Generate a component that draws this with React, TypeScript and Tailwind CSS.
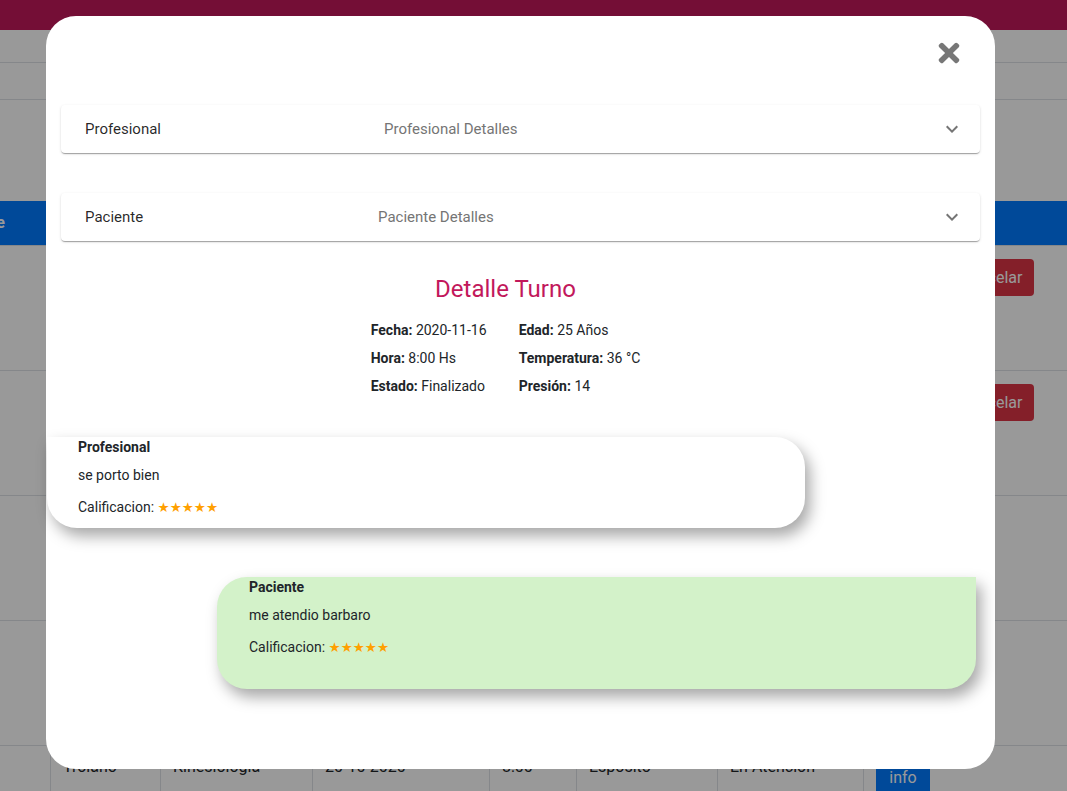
import { FaTimes } from 'react-icons/fa';

const rows = [
  { esp: 'Pereyra', espec: 'Pediatria', fecha: '16-11-2020', hora: '8:00', prof: 'Gomez', estado: 'Finalizado', cancel: true },
  { esp: 'Lopez', espec: 'Cardiologia', fecha: '18-11-2020', hora: '9:30', prof: 'Martinez', estado: 'Pendiente', cancel: true },
  { esp: 'Diaz', espec: 'Odontologia', fecha: '21-11-2020', hora: '10:00', prof: 'Fernandez', estado: 'Cancelado', cancel: false },
  { esp: 'Suarez', espec: 'Traumatologia', fecha: '24-11-2020', hora: '11:00', prof: 'Rossi', estado: 'Rechazado', cancel: false },
  { esp: 'Troiano', espec: 'Kinesiologia', fecha: '20-10-2020', hora: '8:00', prof: 'Esposito', estado: 'En Atencion', cancel: false },
];

const gridCols = 'grid grid-cols-[50px_110px_152px_177px_87px_141px_146px_204px]';

function Stars() {
  return (
    <span className="font-['DejaVu_Sans',sans-serif] text-[13.5px] text-[#ffa000]">★★★★★</span>
  );
}

function Chevron() {
  return (
    <svg viewBox="0 0 24 24" className="h-6 w-6 fill-[#757575]">
      <path d="M16.59 8.59L12 13.17 7.41 8.59 6 10l6 6 6-6z" />
    </svg>
  );
}

export default function App() {
  return (
    <div className="relative h-[791px] overflow-hidden bg-white font-['Roboto','Liberation_Sans',sans-serif] text-[#212529]">
      {/* page behind the modal */}
      <div className="h-[30px] bg-[#c2185b]" />
      <div className="h-[32px]" />
      <div className="h-[38px] border-y border-[#dee2e6]" />
      <div className="h-[101px]" />

      <div className={`${gridCols} h-[44px] items-center bg-[#007bff] text-base font-bold text-white`}>
        <div className="flex justify-end overflow-hidden pr-[45px]">
          <span className="whitespace-nowrap">Paciente</span>
        </div>
        <div className="px-3">Especialista</div>
        <div className="px-3">Especialidad</div>
        <div className="px-3">Fecha</div>
        <div className="px-3">Hora</div>
        <div className="px-3">Profesional</div>
        <div className="px-3">Estado</div>
        <div className="px-3">Acciones</div>
      </div>

      {rows.map((r, i) => (
        <div key={i} className={`${gridCols} h-[125px] border-t border-[#dee2e6] text-base`}>
          <div />
          <div className="border-l border-[#dee2e6] px-3 pt-[9px]">{r.esp}</div>
          <div className="border-l border-[#dee2e6] px-3 pt-[9px]">{r.espec}</div>
          <div className="border-l border-[#dee2e6] px-3 pt-[9px]">{r.fecha}</div>
          <div className="border-l border-[#dee2e6] px-3 pt-[9px]">{r.hora}</div>
          <div className="border-l border-[#dee2e6] px-3 pt-[9px]">{r.prof}</div>
          <div className="border-l border-[#dee2e6] px-3 pt-[9px]">{r.estado}</div>
          <div className="flex items-start gap-[18px] border-l border-[#dee2e6] pl-[12px] pt-[13px]">
            <button className="h-[37px] w-[54px] rounded bg-[#007bff] text-base text-white">info</button>
            {r.cancel && (
              <button className="h-[37px] w-[86px] rounded bg-[#dc3545] text-base text-white">Cancelar</button>
            )}
          </div>
        </div>
      ))}

      {/* overlay + modal */}
      <div className="absolute inset-0 bg-black/40">
        <div className="absolute left-[46px] top-[16px] h-[753px] w-[949px] rounded-[30px] bg-white">
          <div className="flex h-[89px] items-start justify-end pr-[31px] pt-[22px]">
            <FaTimes size={30} color="#777777" />
          </div>

          <div className="mx-[15px] flex h-[48px] items-center rounded bg-white pl-6 pr-4 text-[15px] shadow-[0_2px_1px_-1px_rgba(0,0,0,0.2),0_1px_1px_0_rgba(0,0,0,0.14),0_1px_3px_0_rgba(0,0,0,0.12)]">
            <div className="w-[299px] text-black/85">Profesional</div>
            <div className="text-[#757575]">Profesional Detalles</div>
            <div className="ml-auto">
              <Chevron />
            </div>
          </div>

          <div className="mx-[15px] mt-[40px] flex h-[48px] items-center rounded bg-white pl-6 pr-4 text-[15px] shadow-[0_2px_1px_-1px_rgba(0,0,0,0.2),0_1px_1px_0_rgba(0,0,0,0.14),0_1px_3px_0_rgba(0,0,0,0.12)]">
            <div className="w-[293px] text-black/85">Paciente</div>
            <div className="text-[#757575]">Paciente Detalles</div>
            <div className="ml-auto">
              <Chevron />
            </div>
          </div>

          <div className="ml-[15px] mr-[45px]">
            <h2 className="mt-[32px] text-center text-[24px] leading-8 text-[#c2185b]">Detalle Turno</h2>
            <div className="mx-auto mt-[11px] grid w-fit grid-cols-[148px_auto] whitespace-nowrap text-[14px] leading-[28px]">
              <div><b>Fecha:</b> 2020-11-16</div>
              <div><b>Edad:</b> 25 Años</div>
              <div><b>Hora:</b> 8:00 Hs</div>
              <div><b>Temperatura:</b> 36 °C</div>
              <div><b>Estado:</b> Finalizado</div>
              <div><b>Presión:</b> 14</div>
            </div>
          </div>

          {/* comentarios */}
          <div className="ml-[1px] mt-[37px] h-[91px] w-[758px] rounded-[30px] rounded-tl-none bg-white pl-[31px] text-[14px] leading-5 shadow-[5px_8px_15px_rgba(0,0,0,0.35)]">
            <div className="font-bold">Profesional</div>
            <p className="mt-2">se porto bien</p>
            <p className="mt-3">
              Calificacion: <Stars />
            </p>
          </div>

          <div className="ml-[171px] mt-[49px] h-[112px] w-[759px] rounded-[30px] rounded-tr-none bg-[#d3f2c9] pl-[32px] text-[14px] leading-5 shadow-[5px_8px_15px_rgba(0,0,0,0.35)]">
            <div className="font-bold">Paciente</div>
            <p className="mt-2">me atendio barbaro</p>
            <p className="mt-3">
              Calificacion: <Stars />
            </p>
          </div>
        </div>
      </div>
    </div>
  );
}
